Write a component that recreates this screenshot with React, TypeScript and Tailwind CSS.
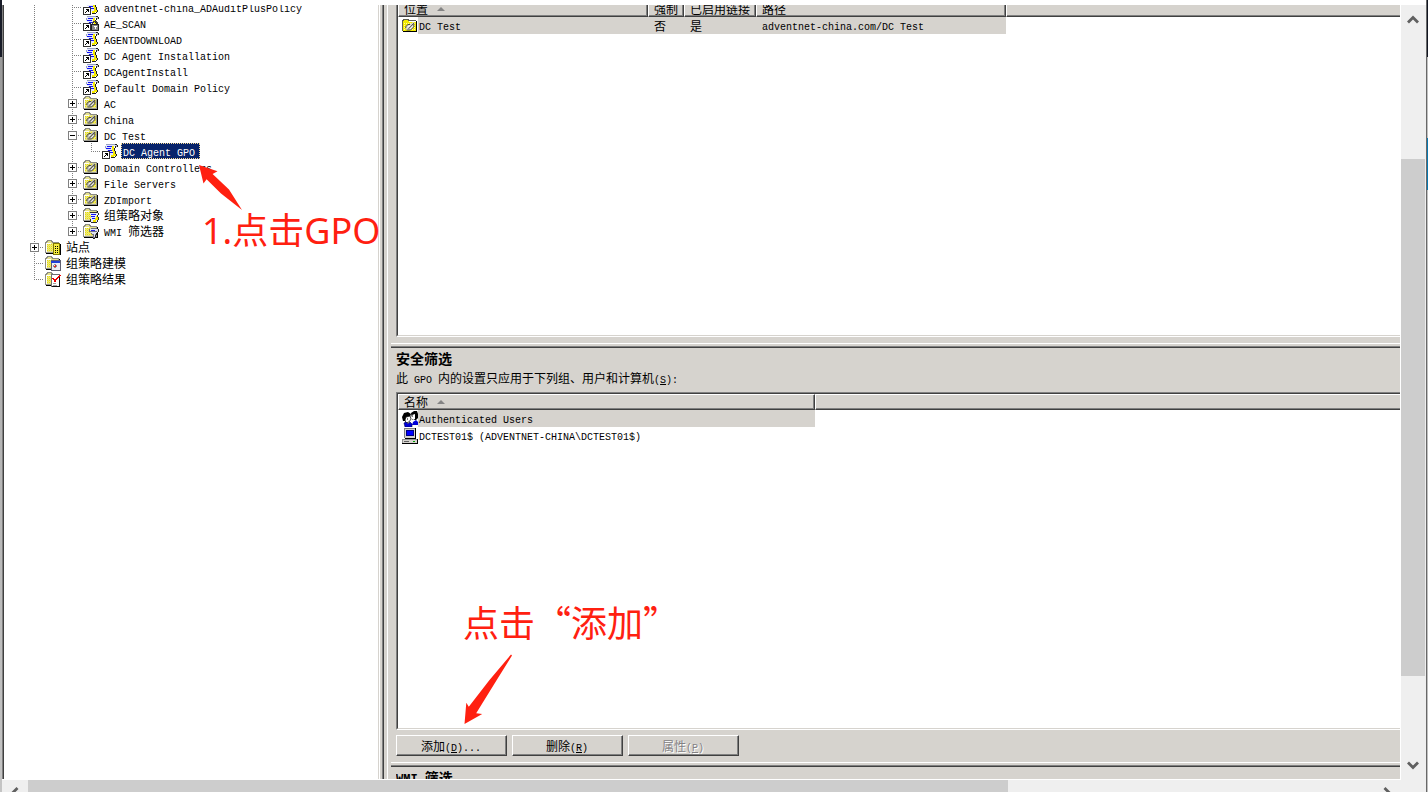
import React from 'react';

type IconKind = 'gpo' | 'gpoLocked' | 'ou' | 'objects' | 'filters' | 'sites' | 'modeling' | 'results';
type Guide = 'none' | 'line' | 'tee' | 'elbow' | 'plus' | 'plusLast' | 'minus';

interface TreeRow {
  label: string;
  icon: IconKind;
  guides: Guide[];
  selected?: boolean;
}

const TREE: TreeRow[] = [
  { label: 'adventnet-china_ADAuditPlusPolicy', icon: 'gpo', guides: ['line', 'none', 'tee'] },
  { label: 'AE_SCAN', icon: 'gpoLocked', guides: ['line', 'none', 'tee'] },
  { label: 'AGENTDOWNLOAD', icon: 'gpo', guides: ['line', 'none', 'tee'] },
  { label: 'DC Agent Installation', icon: 'gpo', guides: ['line', 'none', 'tee'] },
  { label: 'DCAgentInstall', icon: 'gpo', guides: ['line', 'none', 'tee'] },
  { label: 'Default Domain Policy', icon: 'gpo', guides: ['line', 'none', 'tee'] },
  { label: 'AC', icon: 'ou', guides: ['line', 'none', 'plus'] },
  { label: 'China', icon: 'ou', guides: ['line', 'none', 'plus'] },
  { label: 'DC Test', icon: 'ou', guides: ['line', 'none', 'minus'] },
  { label: 'DC Agent GPO', icon: 'gpo', guides: ['line', 'none', 'line', 'elbow'], selected: true },
  { label: 'Domain Controllers', icon: 'ou', guides: ['line', 'none', 'plus'] },
  { label: 'File Servers', icon: 'ou', guides: ['line', 'none', 'plus'] },
  { label: 'ZDImport', icon: 'ou', guides: ['line', 'none', 'plus'] },
  { label: '组策略对象', icon: 'objects', guides: ['line', 'none', 'plus'] },
  { label: 'WMI 筛选器', icon: 'filters', guides: ['line', 'none', 'plusLast'] },
  { label: '站点', icon: 'sites', guides: ['plus'] },
  { label: '组策略建模', icon: 'modeling', guides: ['tee'] },
  { label: '组策略结果', icon: 'results', guides: ['elbow'] },
];

/* Latin runs are set in a fixed-pitch face, half the width of a Chinese character. */
function Mixed({ text }: { text: string }) {
  return (
    <>
      {text.split(/([\x20-\x7e]+)/).map((run, i) =>
        i % 2 === 1 ? (
          <span key={i} className="whitespace-pre font-['Liberation_Mono',monospace] text-[10px] leading-none">
            {run}
          </span>
        ) : (
          run
        ),
      )}
    </>
  );
}

function Mnemonic({ letter, tail = '' }: { letter: string; tail?: string }) {
  return (
    <span className="font-['Liberation_Mono',monospace] text-[10px] leading-none">
      (<u className="underline-offset-1">{letter}</u>){tail}
    </span>
  );
}

function GuideCell({ kind }: { kind: Guide }) {
  const down = kind === 'line' || kind === 'tee' || kind === 'plus' || kind === 'minus';
  const across = kind !== 'none' && kind !== 'line';
  const box = kind === 'plus' || kind === 'plusLast' || kind === 'minus';
  return (
    <svg width="19" height="16" viewBox="0 0 19 16" shapeRendering="crispEdges" className="shrink-0" aria-hidden="true">
      {kind !== 'none' && (
        <path d={down ? 'M9.5 0V16' : 'M9.5 0V9'} stroke="#808080" strokeDasharray="1 1" />
      )}
      {across && <path d="M9 8.5H19" stroke="#808080" strokeDasharray="1 1" />}
      {box && (
        <>
          <rect x="5.5" y="4.5" width="8" height="8" fill="#fff" stroke="#808080" />
          <path d="M7 8.5H12" stroke="#000" />
          {kind !== 'minus' && <path d="M9.5 6V11" stroke="#000" />}
        </>
      )}
    </svg>
  );
}

function Folder() {
  return (
    <>
      <path d="M1 3h1V2h4v1h1v1h7v10H1z" fill="#e6e28c" />
      <path d="M2 5.5h11M2 7.5h11M2 9.5h11M2 11.5h11" stroke="#ece000" strokeDasharray="1 1" />
      <path d="M3 4.5h3M3 6.5h10M3 8.5h10M3 10.5h10" stroke="#f4ee40" strokeDasharray="1 1" />
      <path d="M.5 14V3.5H1.5V2.5H2.5V1.5H6.5V2.5H7.5V3.5H14" fill="none" stroke="#8c8c84" />
      <path d="M1.5 13V4.5H6" fill="none" stroke="#fff" />
      <path d="M13.5 4V13.5H1" fill="none" stroke="#9c9c94" />
      <path d="M14.5 4V14.5H1" fill="none" stroke="#000" />
    </>
  );
}

/* The rolled sheet laid diagonally across an organizational unit's folder. */
function Sheet({ tint }: { tint: string }) {
  return (
    <g shapeRendering="auto">
      <path d="M3.5 9L6 6.5H8L11 4L12.5 5L11.5 9L9 12H4.5z" fill={tint} />
      <path d="M3.8 10V8.5L6 6.5H8M6.5 10.8L11.8 5.2M8.6 12L11.8 8.8V5.5M4.5 12H8.6" fill="none" stroke="#404038" strokeWidth=".9" />
      <path d="M5.5 9.2L8 7.4M8.2 10.8L10.6 8.2" stroke="#fff" strokeWidth=".9" />
    </g>
  );
}

function Scroll() {
  return (
    <>
      <path d="M4 1H14V3H12V12H3L5 8L3 5z" fill="#e4e8f8" />
      <path d="M4 1.5H13M3.5 3V5" stroke="#98a0c0" fill="none" />
      <path d="M5 3.5H10M4 5.5H9M6 7.5H10M8 9.5H11" stroke="#1010f8" />
      <path d="M10 3H12V6H13V10H14V13H12V15H9V12H11V8H10z" fill="#f6ea00" />
      <path d="M13 1.5H15M15.5 2V4M13.5 3V5M12.5 5V8M13.5 8V11M14.5 11V13M13.5 13V14M9 14.5H13" stroke="#202020" fill="none" />
      <path d="M14 2H15V4H14z" fill="#b8b8b8" />
    </>
  );
}

function TreeIcon({ kind }: { kind: IconKind }) {
  return (
    <svg width="16" height="16" viewBox="0 0 16 16" shapeRendering="crispEdges" className="ml-px shrink-0" aria-hidden="true">
      {(kind === 'gpo' || kind === 'gpoLocked') && (
        <>
          <Scroll />
          <rect x=".5" y="8.5" width="7" height="7" fill="#fff" stroke="#303030" />
          <path d="M3 10.5H6M5.5 10V13M4.5 11V12M3.5 12V13M2.5 13V14M4 11.5H5" stroke="#000" />
        </>
      )}
      {kind === 'gpoLocked' && (
        <>
          <path d="M9.5 10V7.5H10.5V6.5H13.5V7.5H14.5V10" fill="none" stroke="#404040" />
          <rect x="8.5" y="9.5" width="7" height="6" fill="#888" stroke="#202020" />
          <path d="M11 11.5H14M12.5 11V14" stroke="#fff" />
        </>
      )}
      {kind === 'ou' && (
        <>
          <Folder />
          <Sheet tint="#b4b4ac" />
        </>
      )}
      {kind === 'objects' && (
        <>
          <Folder />
          <path d="M7 5H15V8H14V15H7L8 11z" fill="#e8ecfa" />
          <path d="M8 7.5H13M8 9.5H12M9 11.5H13" stroke="#1010f8" />
          <path d="M13 9H15V13H13V15H10V13H12V11H13z" fill="#f6ea00" />
          <path d="M7 5.5H15M15.5 6V8M14.5 8V10M15.5 10V13M14.5 13V15M8 15.5H14M7.5 12V15" stroke="#303030" />
        </>
      )}
      {kind === 'filters' && (
        <>
          <Folder />
          <path d="M7 6H15V9L12 12V15H10V12L7 9z" fill="#dfe2ee" />
          <path d="M8 5.5H14M6.5 6V9M7 8.5H14M8 10.5H9M9 11.5H10V14M12.5 11V14M10 14.5H12M13 10.5H14" stroke="#707080" fill="none" />
          <path d="M8 7.5H12" stroke="#2020e8" />
          <path d="M15.5 6V9M14.5 9V10M13.5 10V12M12.5 12V15M10 15.5H12" stroke="#202020" />
        </>
      )}
      {kind === 'sites' && (
        <>
          <Folder />
          <rect x="8.5" y="4.5" width="6" height="11" fill="#f6ee40" stroke="#807800" />
          <path d="M10 7.5H11M12 7.5H13M10 9.5H11M12 9.5H13M10 11.5H11M12 11.5H13M10 13.5H11M12 13.5H13" stroke="#000" />
          <path d="M15.5 5V16" stroke="#000" />
        </>
      )}
      {kind === 'modeling' && (
        <>
          <Folder />
          <rect x="6.5" y="5.5" width="9" height="10" fill="#eeeef4" stroke="#606070" />
          <path d="M6 6H15V8H6z" fill="#2040d8" />
          <path d="M9 9.5H11M8.5 10V12M11.5 10V12M9 12.5H11" stroke="#909098" />
          <path d="M10 10H11V12H9V11z" fill="#e02020" />
        </>
      )}
      {kind === 'results' && (
        <>
          <Folder />
          <rect x="6.5" y="3.5" width="8" height="12" fill="#fff" stroke="#707070" />
          <path d="M14.5 5V15.5H7" fill="none" stroke="#101010" />
          <path d="M8 12.5H11M8 14H12" stroke="#a0a0a0" />
          <path d="M8 7L10 10L15 4" fill="none" stroke="#f00000" strokeWidth="1.6" />
        </>
      )}
    </svg>
  );
}

function LinkedFolderIcon() {
  return (
    <svg width="16" height="16" viewBox="0 0 16 16" shapeRendering="crispEdges" className="shrink-0" aria-hidden="true">
      <path d="M1 3H2V2H6V3H7V4H14V13H1z" fill="#f2ea00" />
      <path d="M2 5.5H13M2 7.5H13M2 9.5H13M2 11.5H13" stroke="#fff9a0" strokeDasharray="1 1" />
      <path d="M.5 13V2.5H1.5V1.5H6.5V2.5H14" fill="none" stroke="#606050" />
      <path d="M14.5 3V13.5H1" fill="none" stroke="#000" />
      <Sheet tint="#d8d8d0" />
    </svg>
  );
}

function UsersIcon() {
  return (
    <svg width="16" height="16" viewBox="0 0 16 16" className="shrink-0" aria-hidden="true">
      <path d="M9 2L12 0H15L16 3V7L14 9H10z" fill="#000" />
      <path d="M10 4L13 3V8L11 9L9 7z" fill="#fff" />
      <path d="M11 11L14 9L16 11V14H10z" fill="#0000d8" />
      <path d="M0 6L2 2L6 1L9 3L8 6L5 7L4 10H1z" fill="#000" />
      <path d="M4 6L8 5L9 8L7 11L4 12L3 9z" fill="#fff" stroke="#000" strokeWidth=".7" />
      <path d="M2 12L4 11L6 13L8 11L10 13V16H3z" fill="#0000d8" stroke="#000050" strokeWidth=".6" />
      <path d="M5 8H6M10 5H11M13 5H14" stroke="#000" />
    </svg>
  );
}

function ComputerIcon() {
  return (
    <svg width="16" height="16" viewBox="0 0 16 16" shapeRendering="crispEdges" className="shrink-0" aria-hidden="true">
      <rect x="2" y="0" width="12" height="10" fill="#d6d3ce" />
      <path d="M2.5 10V.5H13" fill="none" stroke="#808080" />
      <path d="M13.5 0V10.5H3" fill="none" stroke="#000" />
      <rect x="4" y="2" width="8" height="6" fill="#000080" />
      <rect x="5" y="3" width="6" height="4" fill="#0000ff" />
      <rect x="0" y="11" width="15" height="4" fill="#d6d3ce" />
      <path d="M0 11.5H15M.5 11V15" stroke="#909090" />
      <path d="M15.5 11V15.5H0" fill="none" stroke="#000" />
      <path d="M2 13.5H7" stroke="#606060" />
      <path d="M11 13.5H13" stroke="#00a000" />
    </svg>
  );
}

function SortMark() {
  return (
    <svg width="8" height="4" viewBox="0 0 8 4" className="ml-[9px] shrink-0" aria-hidden="true">
      <path d="M0 4L4 0L8 4z" fill="#848484" />
    </svg>
  );
}

function HeaderCell({ children, last = false }: { children?: React.ReactNode; last?: boolean }) {
  return (
    <th
      scope="col"
      className={
        'h-4 border-b border-l border-t border-b-[#404040] border-l-white border-t-white p-0 text-left font-normal ' +
        (last ? '' : 'border-r border-r-[#404040]')
      }
    >
      <div
        className={
          'flex h-[14px] items-center overflow-hidden whitespace-nowrap border-b border-[#808080] pl-[5px] leading-3 ' +
          (last ? '' : 'border-r')
        }
      >
        {children}
      </div>
    </th>
  );
}

const LIST = 'overflow-hidden border-b border-l border-b-white border-l-[#808080] bg-white';
const LIST_INNER = 'h-full overflow-hidden border-b border-l border-b-[#d6d3ce] border-l-[#404040]';
const TABLE = 'w-full table-fixed border-separate border-spacing-0';
const CELL = 'flex h-[17px] items-center';

function LocationList() {
  return (
    <div className={`h-[332px] shrink-0 ${LIST}`}>
      <div className={LIST_INNER}>
        <table className={`-mt-1 ${TABLE}`}>
          <colgroup>
            <col className="w-[250px]" />
            <col className="w-[36px]" />
            <col className="w-[72px]" />
            <col className="w-[250px]" />
            <col />
          </colgroup>
          <thead className="bg-[#d6d3ce]">
            <tr>
              <HeaderCell>
                位置
                <SortMark />
              </HeaderCell>
              <HeaderCell>强制</HeaderCell>
              <HeaderCell>已启用链接</HeaderCell>
              <HeaderCell>路径</HeaderCell>
              <HeaderCell last />
            </tr>
          </thead>
          <tbody>
            <tr>
              <td className="p-0">
                <div className={`${CELL} pl-1`}>
                  <LinkedFolderIcon />
                  <span className="h-[17px] flex-1 bg-[#d6d3ce] pl-px leading-4">
                    <Mixed text="DC Test" />
                  </span>
                </div>
              </td>
              <td className="p-0">
                <div className={`${CELL} bg-[#d6d3ce] pl-[6px] leading-4`}>否</div>
              </td>
              <td className="p-0">
                <div className={`${CELL} bg-[#d6d3ce] pl-[6px] leading-4`}>是</div>
              </td>
              <td className="p-0">
                <div className="h-[17px] bg-[#d6d3ce] pl-[6px] leading-4">
                  <Mixed text="adventnet-china.com/DC Test" />
                </div>
              </td>
              <td className="p-0" />
            </tr>
          </tbody>
        </table>
      </div>
    </div>
  );
}

function SecurityList() {
  const rows = [
    { name: 'Authenticated Users', icon: <UsersIcon />, active: true },
    { name: 'DCTEST01$ (ADVENTNET-CHINA\\DCTEST01$)', icon: <ComputerIcon />, active: false },
  ];
  return (
    <div className={`min-h-0 flex-1 border-t border-t-[#808080] ${LIST}`}>
      <div className={`border-t border-t-[#404040] ${LIST_INNER}`}>
        <table className={TABLE}>
          <colgroup>
            <col className="w-[417px]" />
            <col />
          </colgroup>
          <thead className="bg-[#d6d3ce]">
            <tr>
              <HeaderCell>
                名称
                <SortMark />
              </HeaderCell>
              <HeaderCell last />
            </tr>
          </thead>
          <tbody>
            {rows.map((row) => (
              <tr key={row.name}>
                <td className="p-0">
                  <div className={`${CELL} pl-1`}>
                    {row.icon}
                    <span className={'h-[17px] flex-1 pl-px leading-4 ' + (row.active ? 'bg-[#d6d3ce]' : '')}>
                      <Mixed text={row.name} />
                    </span>
                  </div>
                </td>
                <td className="p-0" />
              </tr>
            ))}
          </tbody>
        </table>
      </div>
    </div>
  );
}

function Divider() {
  return (
    <div className="-ml-[5px] h-[5px] shrink-0 border-b border-t border-b-[#404040] border-t-white">
      <div className="h-[3px] border-b border-b-[#808080]" />
    </div>
  );
}

function PushButton({ text, letter, tail, disabled }: { text: string; letter: string; tail?: string; disabled?: boolean }) {
  return (
    <button
      type="button"
      disabled={disabled}
      className={
        'h-[21px] w-[111px] border-b border-l border-r border-t border-b-[#404040] border-l-white border-r-[#404040] border-t-white bg-[#d6d3ce] ' +
        (disabled ? 'text-[#848284] [text-shadow:1px_1px_0_#fff]' : '')
      }
    >
      <span className="flex h-full items-center justify-center border-b border-r border-[#808080] leading-[17px]">
        <span>
          {text}
          <Mnemonic letter={letter} tail={tail} />
        </span>
      </span>
    </button>
  );
}

function Chevron({ dir }: { dir: 'up' | 'down' | 'left' | 'right' }) {
  const paths = {
    up: 'M2 9.5L7 4.5L12 9.5',
    down: 'M2 4.5L7 9.5L12 4.5',
    left: 'M9.5 2L4.5 7L9.5 12',
    right: 'M4.5 2L9.5 7L4.5 12',
  };
  return (
    <svg width="14" height="14" viewBox="0 0 14 14" aria-hidden="true">
      <path d={paths[dir]} fill="none" stroke="#606060" strokeWidth="2.8" />
    </svg>
  );
}

function VerticalScrollbar() {
  return (
    <div className="flex w-[25px] shrink-0 flex-col bg-[#efefef] pr-px">
      <button type="button" aria-label="向上滚动" className="flex h-[30px] shrink-0 items-center justify-center">
        <Chevron dir="up" />
      </button>
      <div className="flex-[124]" />
      <div className="flex-[517] bg-[#cdcdcd]" />
      <div className="flex-[74]" />
      <button type="button" aria-label="向下滚动" className="flex h-[30px] shrink-0 items-center justify-center">
        <Chevron dir="down" />
      </button>
    </div>
  );
}

function HorizontalScrollbar() {
  return (
    <div className="flex h-3 shrink-0 overflow-hidden bg-[#efefef] pr-[26px]">
      <button type="button" aria-label="向左滚动" className="flex h-[26px] w-[26px] shrink-0 items-center justify-center">
        <Chevron dir="left" />
      </button>
      <div className="flex-[980] bg-[#cdcdcd]" />
      <div className="flex-[366]" />
      <button type="button" aria-label="向右滚动" className="flex h-[26px] w-[26px] shrink-0 items-center justify-center">
        <Chevron dir="right" />
      </button>
    </div>
  );
}

function TreePane() {
  return (
    <nav className="w-[374px] shrink-0 overflow-hidden bg-white pl-[21px]">
      <ul className="-mt-[6px]">
        {TREE.map((row) => (
          <li key={row.label} className="flex h-4 whitespace-nowrap leading-4">
            {row.guides.map((g, i) => (
              <GuideCell key={i} kind={g} />
            ))}
            <TreeIcon kind={row.icon} />
            <span
              className={
                row.selected
                  ? 'ml-[3px] h-4 bg-[#08246b] pl-[2px] pr-[5px] text-white outline-1 -outline-offset-1 outline-dotted outline-[#f7db94]'
                  : 'ml-[3px] h-4 px-[2px]'
              }
            >
              <Mixed text={row.label} />
            </span>
          </li>
        ))}
      </ul>
    </nav>
  );
}

function DetailsPane() {
  return (
    <main className="flex min-w-0 flex-1 flex-col overflow-hidden border-l border-white bg-[#d6d3ce] pl-2">
      <LocationList />
      <div className="h-[6px] shrink-0" />
      <Divider />
      <section className="flex min-h-0 flex-1 flex-col">
        <div className="h-[44px] shrink-0 pt-px">
          <h2 className="text-[14px] font-bold leading-[18px]">安全筛选</h2>
          <p className="whitespace-nowrap pt-[3px] leading-4">
            <Mixed text="此 GPO 内的设置只应用于下列组、用户和计算机" />
            <Mnemonic letter="S" tail=":" />
          </p>
        </div>
        <SecurityList />
        <div className="flex shrink-0 gap-[5px] pb-[6px] pt-[5px]">
          <PushButton text="添加" letter="D" tail="..." />
          <PushButton text="删除" letter="R" />
          <PushButton text="属性" letter="P" disabled />
        </div>
      </section>
      <Divider />
      <section className="h-3 shrink-0 overflow-hidden pt-px">
        <h2 className="text-[14px] font-bold leading-[18px]">
          <span className="font-['Liberation_Mono',monospace] text-[12px] leading-none">WMI </span>筛选
        </h2>
      </section>
    </main>
  );
}

function Annotations() {
  return (
    <div className="pointer-events-none text-[36px] leading-[48px] text-[#ff2010]">
      <span className="absolute left-[202px] top-[207px] whitespace-nowrap font-['Noto_Sans','Noto_Sans_CJK_SC',sans-serif]">
        1.点击GPO
      </span>
      <svg className="absolute left-[196px] top-[162px]" width="48" height="50" viewBox="196 162 48 50" aria-hidden="true">
        <path d="M199 165L217.5 171.3L212.6 174L229 189.5L242 210L221 193.5L206.6 179.2L203.5 183.6z" fill="#ff2010" />
      </svg>
      <span className="absolute left-[463px] top-[597px] whitespace-nowrap font-['Noto_Sans_CJK_SC',sans-serif]">
        点击“添加”
      </span>
      <svg className="absolute left-[462px] top-[653px]" width="52" height="72" viewBox="462 653 52 72" aria-hidden="true">
        <path d="M464.5 724L466.3 702.7L468.8 706.8L489.5 680L511 654.5L512 655.5L495.5 682L476.2 713.2L482.2 714z" fill="#ff2010" />
      </svg>
    </div>
  );
}

export default function App() {
  return (
    <div
      lang="zh-CN"
      className="relative flex h-screen overflow-hidden bg-white font-['Noto_Sans_CJK_SC',sans-serif] text-[12px] text-black"
    >
      <div className="flex w-[2px] shrink-0 flex-col bg-[#a8a8a8]">
        <div className="h-[57px] bg-[#181c28]" />
        <div className="flex-1 bg-linear-to-b from-[#9a9a9a] via-[#b4b4b4] to-[#c4c4c4]" />
      </div>
      <div className="flex min-w-0 flex-1 flex-col pt-[5px]">
        <div className="flex min-h-0 flex-1">
          <div className="flex min-w-0 flex-1 border-b border-white">
            <div className="w-[2px] shrink-0 border-l border-[#808080] bg-[#404040]" />
            <TreePane />
            <div className="w-[2px] shrink-0 border-l border-[#d6d3ce] bg-white" />
            <div className="w-[4px] shrink-0 border-r border-[#404040] bg-[#d6d3ce]">
              <div className="h-full border-r border-[#808080]" />
            </div>
            <div className="w-[3px] shrink-0 bg-[#d6d3ce]" />
            <DetailsPane />
            <div className="w-px shrink-0 bg-white" />
          </div>
          <VerticalScrollbar />
        </div>
        <HorizontalScrollbar />
      </div>
      <div className="w-px shrink-0 bg-[#686868]" />
      <div className="flex w-px shrink-0 flex-col">
        <div className="h-[57px] bg-[#101420]" />
        <div className="h-[81px] bg-[#c0c0c0]" />
        <div className="h-[52px] bg-[#0878b0]" />
        <div className="flex-1 bg-[#c0c0c0]" />
      </div>
      <Annotations />
    </div>
  );
}
